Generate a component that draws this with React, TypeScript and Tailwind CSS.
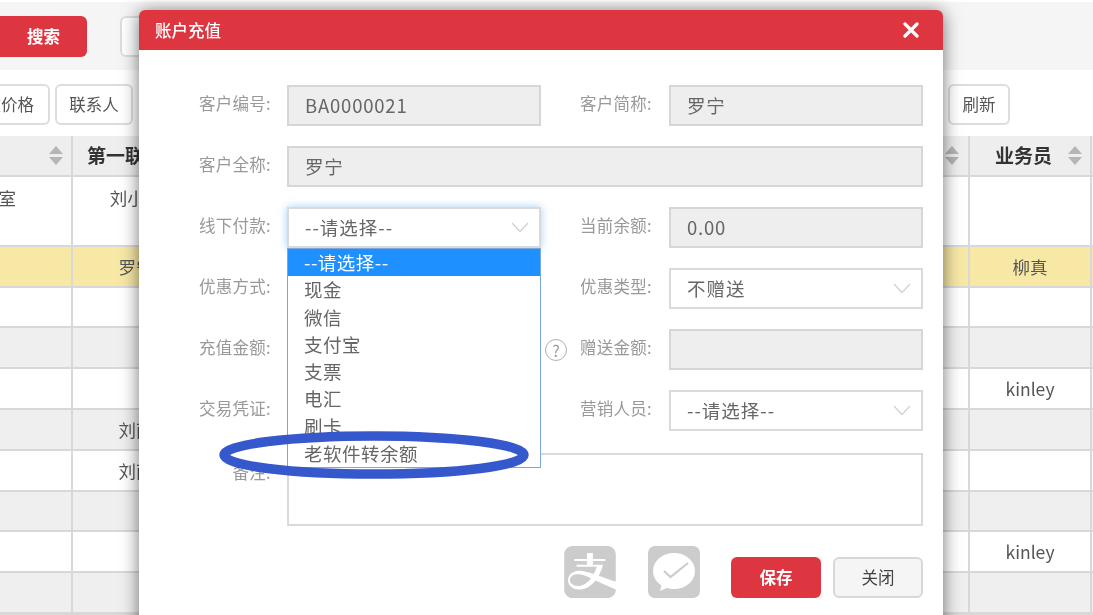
import React from "react";
import { SiAlipay } from "react-icons/si";

const font = "font-['Noto_Sans_CJK_SC','Noto_Sans',sans-serif]";

const rows = [
  { h: "h-[70px]", bg: "bg-white", left: "办公室", name: "刘小红", sales: "" },
  { h: "h-[41px]", bg: "bg-[#f8e8a6]", left: "", name: "罗宁", sales: "柳真" },
  { h: "h-[40px]", bg: "bg-white", left: "", name: "", sales: "" },
  { h: "h-[41px]", bg: "bg-[#efefef]", left: "", name: "", sales: "" },
  { h: "h-[41px]", bg: "bg-white", left: "", name: "", sales: "kinley" },
  { h: "h-[41px]", bg: "bg-[#efefef]", left: "", name: "刘雨", sales: "" },
  { h: "h-[41px]", bg: "bg-white", left: "", name: "刘雨", sales: "" },
  { h: "h-[40px]", bg: "bg-[#efefef]", left: "", name: "", sales: "" },
  { h: "h-[41px]", bg: "bg-white", left: "", name: "", sales: "kinley" },
  { h: "h-[41px]", bg: "bg-[#efefef]", left: "", name: "", sales: "" },
];

const options = ["现金", "微信", "支付宝", "支票", "电汇", "刷卡", "老软件转余额"];

const SortIcon = () => (
  <svg width="14" height="19" viewBox="0 0 14 19" className="shrink-0">
    <path d="M7 0L14 8H0Z M0 11H14L7 19Z" fill="#b5b5b5" />
  </svg>
);

const Chevron = () => (
  <svg width="18" height="11" viewBox="0 0 18 11" fill="none" stroke="#d0d0d0" strokeWidth="1.2">
    <path d="M1 1L9 9.5L17 1" />
  </svg>
);

const Label = ({ text, width, pad = "pr-4" }: { text: string; width: string; pad?: string }) => (
  <label className={`${width} ${pad} shrink-0 -mt-[4px] text-right text-[16.5px] tracking-[0.3px] text-[#999]`}>{text}</label>
);

const ReadOnly = ({ value, width }: { value: string; width: string }) => (
  <div className={`${width} h-[41px] shrink-0 border-2 border-[#d6d6d6] bg-[#eeeeee] flex items-center pl-4 text-[18.5px] tracking-[0.8px] text-[#666]`}>
    {value}
  </div>
);

const SelectBox = ({ value, width }: { value: string; width: string }) => (
  <div className={`${width} h-[41px] shrink-0 border-2 border-[#dadada] bg-white flex items-center justify-between pl-4 pr-[10px] text-[18.5px] tracking-[1px] text-[#666]`}>
    <span>{value}</span>
    <Chevron />
  </div>
);

const WechatPay = () => (
  <svg width="52" height="52" viewBox="0 0 52 52">
    <rect width="52" height="52" rx="7" fill="#cccccc" />
    <ellipse cx="26" cy="25" rx="21" ry="18" fill="#ffffff" />
    <path d="M14 37L12 45L21 41Z" fill="#ffffff" />
    <path d="M16 25l6.500 6L40 17" fill="none" stroke="#cccccc" strokeWidth="2.2" />
  </svg>
);

const App = () => {
  return (
    <div className={`relative w-[1093px] h-[615px] overflow-hidden bg-white blur-[0.4px] ${font}`}>
      <div className="mt-[2px] h-[68px] bg-[#f5f5f5] flex items-center">
        <button className="w-[87px] h-[41px] rounded-r-md bg-[#dd3640] text-white text-[16.5px] font-bold">
          搜索
        </button>
        <div className="ml-[33px] w-[60px] h-[41px] rounded-md border-2 border-[#ddd] bg-white" />
      </div>

      <div className="h-[66px] flex items-center justify-between pr-[83px] pt-[2px]">
        <div className="flex gap-[5px]">
          <button className="w-[50px] h-[41px] rounded-r-md border-2 border-l-0 border-[#ddd] bg-white text-[16.5px] text-[#555] overflow-hidden whitespace-nowrap flex justify-end items-center pr-[14px]">
            改价格
          </button>
          <button className="w-[78px] h-[41px] rounded-md border-2 border-[#ddd] bg-white text-[16.5px] text-[#555]">
            联系人
          </button>
        </div>
        <button className="w-[62px] h-[41px] rounded-md border-2 border-[#ddd] bg-white text-[16.5px] text-[#555]">
          刷新
        </button>
      </div>

      <div className="border-b-2 border-[#d8d8d8]">
        <div className="grid grid-cols-[73px_126px_771px_122px_1px] h-[41px] bg-[#eeeeee] border-b-2 border-[#d8d8d8] text-[19px] font-bold text-[#333]">
          <div className="border-r-2 border-[#d8d8d8] flex items-center justify-end pr-[8px]">
            <SortIcon />
          </div>
          <div className="flex items-center pl-[14px] gap-2 whitespace-nowrap">第一联系人</div>
          <div className="border-r-2 border-[#d8d8d8] flex items-center justify-end pr-[9px]">
            <SortIcon />
          </div>
          <div className="border-r-2 border-[#d8d8d8] flex items-center justify-end gap-[16px] pr-[8px]">
            业务员
            <SortIcon />
          </div>
          <div />
        </div>
        {rows.map((r, i) => (
          <div
            key={i}
            className={`grid grid-cols-[73px_126px_771px_122px_1px] ${r.h} ${r.bg} border-b-2 border-[#d8d8d8] text-[17.5px] text-[#555]`}
          >
            <div className="border-r-2 border-[#d8d8d8] overflow-hidden whitespace-nowrap flex justify-end pr-[55px] pt-[8px]">
              {r.left}
            </div>
            <div className={`text-center ${i === 0 ? "pt-[8px]" : "pt-[7px]"}`}>{r.name}</div>
            <div className="border-r-2 border-[#d8d8d8]" />
            <div className={`border-r-2 border-[#d8d8d8] text-center ${i === 0 ? "pt-[8px]" : "pt-[7px]"}`}>{r.sales}</div>
            <div />
          </div>
        ))}
      </div>

      {/* modal */}
      <div className="absolute left-[139px] top-[10px] w-[804px] h-[640px] bg-white rounded-t-md shadow-[0_2px_18px_rgba(0,0,0,0.55)]">
        <div className="h-[40px] bg-[#dd3640] rounded-t-md flex items-center justify-between pl-4 pr-[24px] text-white">
          <span className="text-[16.5px] font-medium">账户充值</span>
          <svg width="16" height="16" viewBox="0 0 16 16" stroke="white" strokeWidth="3.2" strokeLinecap="round">
            <path d="M2 2L14 14M14 2L2 14" />
          </svg>
        </div>

        <div className="pt-[35px] flex flex-col gap-[20px]">
          <div className="flex items-center">
            <Label text="客户编号:" width="w-[148px]" />
            <ReadOnly value="BA0000021" width="w-[254px]" />
            <Label text="客户简称:" width="w-[128px]" pad="pr-[17px]" />
            <ReadOnly value="罗宁" width="w-[254px]" />
          </div>
          <div className="flex items-center">
            <Label text="客户全称:" width="w-[148px]" />
            <ReadOnly value="罗宁" width="w-[636px]" />
          </div>
          <div className="flex items-center">
            <Label text="线下付款:" width="w-[148px]" />
            <div className="relative shadow-[0_0_8px_rgba(102,175,233,0.6)]">
              <SelectBox value="--请选择--" width="w-[254px]" />
            </div>
            <Label text="当前余额:" width="w-[128px]" pad="pr-[17px]" />
            <ReadOnly value="0.00" width="w-[254px]" />
          </div>
          <div className="flex items-center">
            <Label text="优惠方式:" width="w-[148px]" />
            <div className="w-[254px]" />
            <Label text="优惠类型:" width="w-[128px]" pad="pr-[17px]" />
            <SelectBox value="不赠送" width="w-[254px]" />
          </div>
          <div className="flex items-center">
            <Label text="充值金额:" width="w-[148px]" />
            <div className="w-[254px] h-[41px]" />
            <Label text="赠送金额:" width="w-[128px]" pad="pr-[17px]" />
            <ReadOnly value="" width="w-[254px]" />
          </div>
          <div className="flex items-center">
            <Label text="交易凭证:" width="w-[148px]" />
            <div className="w-[254px]" />
            <Label text="营销人员:" width="w-[128px]" pad="pr-[17px]" />
            <SelectBox value="--请选择--" width="w-[254px]" />
          </div>
          <div className="flex items-start mt-[2px]">
            <label className="w-[148px] pr-4 pt-[7px] shrink-0 text-right text-[16.5px] tracking-[0.3px] text-[#999]">备注:</label>
            <div className="w-[636px] h-[73px] border-2 border-[#dadada] bg-white" />
          </div>
        </div>

        <div className="mt-[20px] flex items-end pl-[425px]">
          <SiAlipay className="w-[52px] h-[52px] text-[#cccccc]" />
          <div className="ml-[32px]">
            <WechatPay />
          </div>
          <button className="ml-[31px] w-[90px] h-[41px] rounded-md bg-[#dd3640] text-white text-[16.5px] font-bold">
            保存
          </button>
          <button className="ml-[12px] w-[90px] h-[41px] rounded-md border-2 border-[#d8d8d8] bg-[#f5f5f5] text-[16.5px] text-[#444]">
            关闭
          </button>
        </div>

        {/* open select list */}
        <div className="absolute left-[148px] top-[238px] w-[254px] h-[220px] border border-[#7ba7de] bg-white text-[18.5px] tracking-[0.5px] leading-[27.3px] text-[#666]">
          <div className="bg-[#1e90ff] text-white pl-4">--请选择--</div>
          {options.map((o) => (
            <div key={o} className="pl-4">
              {o}
            </div>
          ))}
        </div>

        {/* help icon */}
        <div className="absolute left-[406px] top-[329px] w-[22px] h-[22px] rounded-full border border-[#b0b0b0] flex items-center justify-center text-[16px] text-[#999]">
          ?
        </div>
      </div>

      {/* hand drawn annotation */}
      <svg className="absolute left-[214px] top-[428px]" width="320" height="55" viewBox="0 0 320 55" fill="none">
        <ellipse cx="160" cy="27" rx="150" ry="19" stroke="#3558cc" strokeWidth="9.500" />
      </svg>
    </div>
  );
};

export default App;
